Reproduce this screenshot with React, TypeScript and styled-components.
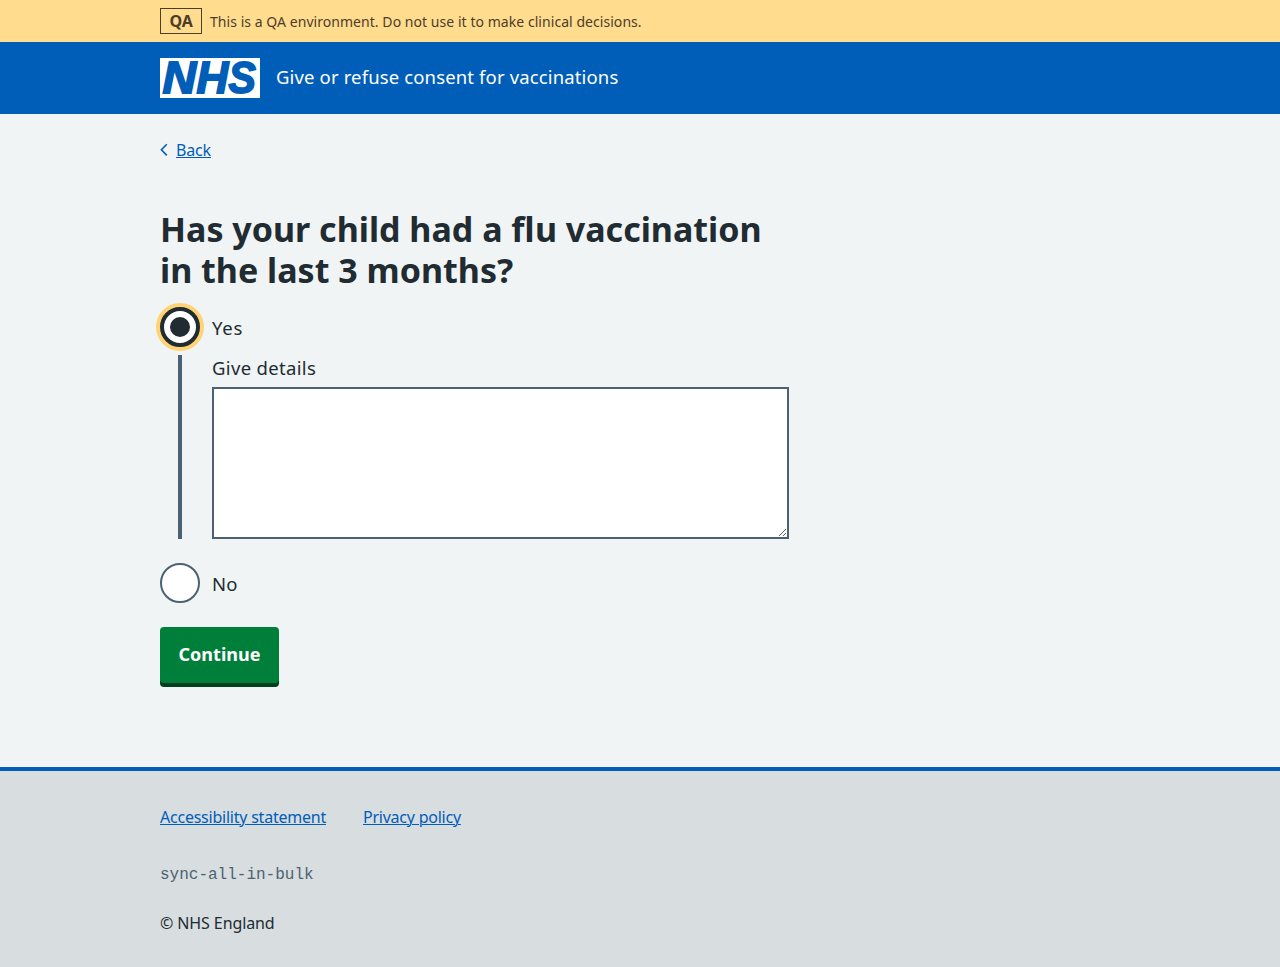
import React, { useState } from "react";
import styled, { createGlobalStyle } from "styled-components";

const color = {
  blue: "#005eb8",
  text: "#212b32",
  secondary: "#4c6272",
  page: "#f0f4f5",
  footer: "#d8dde0",
  banner: "#ffdc8e",
  bannerText: "#4d3d2b",
  focus: "#ffd373",
  green: "#007f3b",
  greenShadow: "#00401e",
};

const GlobalStyle = createGlobalStyle`
  *, *::before, *::after { box-sizing: border-box; }
  body {
    margin: 0;
    background: ${color.footer};
    color: ${color.text};
    font-family: "Noto Sans", "Open Sans", Arial, sans-serif;
    font-size: 18.5px;
    font-weight: 400;
    line-height: 28px;
  }
`;

const Container = styled.div`
  width: 960px;
  margin: 0 auto;
`;

const Banner = styled.div`
  background: ${color.banner};
  color: ${color.bannerText};
`;

const BannerRow = styled(Container)`
  display: flex;
  align-items: center;
  gap: 8px;
  height: 42px;
`;

const EnvironmentTag = styled.strong`
  width: 42px;
  height: 26px;
  border: 1px solid currentColor;
  font-size: 16px;
  font-weight: 700;
  line-height: 25px;
  letter-spacing: -0.1px;
  text-align: center;
`;

const BannerText = styled.span`
  padding-top: 1px;
  font-size: 14px;
  line-height: 24px;
  letter-spacing: 0.05px;
`;

const Header = styled.header`
  background: ${color.blue};
  color: #fff;
`;

const HeaderRow = styled(Container)`
  display: flex;
  align-items: center;
  gap: 16px;
  height: 72px;
`;

const Logo = styled.svg`
  display: block;
  width: 100px;
  height: 40px;
  overflow: visible;
  background: #fff;
`;

const LogoLetter = styled.text`
  fill: ${color.blue};
  stroke: ${color.blue};
  stroke-width: 1.8px;
  font: italic 700 44px "Liberation Sans", Arial, sans-serif;
`;

const ServiceName = styled.span`
  padding-bottom: 2px;
  letter-spacing: 0.14px;
`;

const Page = styled.div`
  background: ${color.page};
`;

const Main = styled(Container)`
  display: flex;
  flex-direction: column;
  align-items: flex-start;
  height: 653px;
  padding-top: 24px;
`;

const Link = styled.a<{ $tracking?: string }>`
  color: ${color.blue};
  font-size: 16px;
  line-height: 24px;
  letter-spacing: ${(p) => p.$tracking ?? "-0.23px"};
  text-decoration: underline;
  text-decoration-thickness: 1px;
  text-underline-offset: 1px;
`;

const BackRow = styled.div`
  display: flex;
  align-items: center;
  gap: 8px;
  height: 24px;
`;

const Chevron = styled.svg`
  width: 8px;
  height: 14px;
  fill: none;
  stroke: ${color.blue};
  stroke-width: 1.6px;
`;

const Title = styled.h1`
  max-width: 625px;
  margin: 47px 0 16px;
  font-size: 34px;
  font-weight: 700;
  line-height: 41px;
`;

const RadioItem = styled.label`
  display: flex;
  align-items: center;
  gap: 12px;
  height: 40px;
  cursor: pointer;
`;

const RadioInput = styled.input`
  appearance: none;
  display: grid;
  place-items: center;
  width: 40px;
  height: 40px;
  margin: 0;
  border: 2px solid ${color.secondary};
  border-radius: 50%;
  background: #fff;
  outline: none;

  &:checked {
    border: 4px solid ${color.text};
    box-shadow: 0 0 0 4px ${color.focus};
  }

  &:checked::before {
    content: "";
    width: 20px;
    height: 20px;
    border-radius: 50%;
    background: ${color.text};
  }
`;

const RadioLabel = styled.span<{ $tracking: string }>`
  padding-top: 2px;
  letter-spacing: ${(p) => p.$tracking};
`;

const Conditional = styled.div`
  display: flex;
  flex-direction: column;
  gap: 6px;
  height: 184px;
  margin: 8px 0 24px 18px;
  padding-left: 30px;
  border-left: 4px solid ${color.secondary};
`;

const DetailsLabel = styled.label`
  line-height: 26px;
  letter-spacing: 0.33px;
`;

const Textarea = styled.textarea`
  display: block;
  width: 577px;
  height: 152px;
  padding: 4px;
  border: 2px solid ${color.secondary};
  border-radius: 0;
  background: #fff;
  color: ${color.text};
  font: inherit;
  outline: none;
  resize: vertical;
`;

const Button = styled.button`
  width: 119px;
  height: 56px;
  margin: 24px 0 0;
  padding: 0 0 3px;
  border: 0;
  border-radius: 4px;
  background: ${color.green};
  box-shadow: 0 4px 0 ${color.greenShadow};
  color: #fff;
  font: inherit;
  font-size: 18px;
  font-weight: 700;
`;

const Footer = styled.footer`
  height: 200px;
  padding-top: 34px;
  border-top: 4px solid ${color.blue};
  background: ${color.footer};
`;

const FooterLinks = styled.nav`
  display: flex;
  gap: 37px;
`;

const Version = styled.p`
  margin: 34px 0 24px;
  color: ${color.secondary};
  font-family: "Liberation Mono", monospace;
  font-size: 16px;
  line-height: 24px;
`;

const Copyright = styled.p`
  margin: 0;
  font-size: 16px;
  line-height: 24px;
  letter-spacing: -0.1px;
`;

export default function App() {
  const [answer, setAnswer] = useState("yes");

  return (
    <>
      <GlobalStyle />
      <Banner>
        <BannerRow>
          <EnvironmentTag>QA</EnvironmentTag>
          <BannerText>This is a QA environment. Do not use it to make clinical decisions.</BannerText>
        </BannerRow>
      </Banner>
      <Header>
        <HeaderRow>
          <Logo viewBox="0 0 100 40" role="img" aria-label="NHS">
            <LogoLetter transform="translate(2.4 35.4) scale(1.06 1)">N</LogoLetter>
            <LogoLetter transform="translate(36.4 35.4)">H</LogoLetter>
            <LogoLetter transform="translate(68.6 35.4) scale(0.93 1)">S</LogoLetter>
          </Logo>
          <ServiceName>Give or refuse consent for vaccinations</ServiceName>
        </HeaderRow>
      </Header>
      <Page>
        <Main as="main">
          <BackRow>
            <Chevron viewBox="0 0 8 14">
              <path d="M6.8 1.2 1.4 6.8l5.4 5.6" />
            </Chevron>
            <Link href="#" $tracking="-0.15px">Back</Link>
          </BackRow>
          <Title>Has your child had a flu vaccination in the last 3 months?</Title>
          <RadioItem>
            <RadioInput type="radio" name="flu" checked={answer === "yes"} onChange={() => setAnswer("yes")} />
            <RadioLabel $tracking="0.7px">Yes</RadioLabel>
          </RadioItem>
          <Conditional>
            <DetailsLabel htmlFor="details">Give details</DetailsLabel>
            <Textarea id="details" />
          </Conditional>
          <RadioItem>
            <RadioInput type="radio" name="flu" checked={answer === "no"} onChange={() => setAnswer("no")} />
            <RadioLabel $tracking="0.1px">No</RadioLabel>
          </RadioItem>
          <Button type="button">Continue</Button>
        </Main>
      </Page>
      <Footer>
        <Container>
          <FooterLinks>
            <Link href="#">Accessibility statement</Link>
            <Link href="#">Privacy policy</Link>
          </FooterLinks>
          <Version>sync-all-in-bulk</Version>
          <Copyright>© NHS England</Copyright>
        </Container>
      </Footer>
    </>
  );
}
